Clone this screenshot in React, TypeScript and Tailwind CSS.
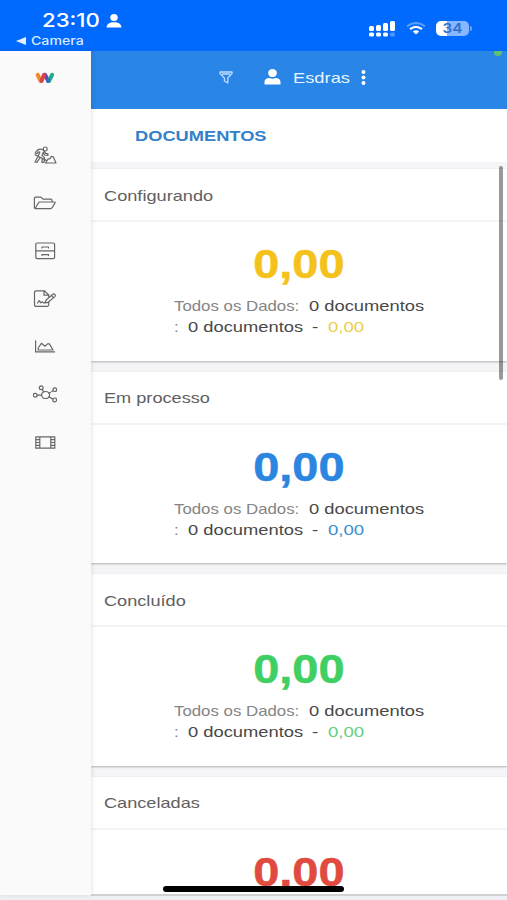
import type { ReactNode } from "react";

const cards = [
  { title: "Configurando", color: "text-[#f4c21a]", small: "text-[#ecd04a]", scale: "scale-x-[1.212]", details: true },
  { title: "Em processo", color: "text-[#2a86e0]", small: "text-[#3b8fd0]", scale: "scale-x-[1.21]", details: true },
  { title: "Concluído", color: "text-[#3fcf63]", small: "text-[#5fd085]", scale: "scale-x-[1.21]", details: true },
  { title: "Canceladas", color: "text-[#e04a3f]", small: "text-[#e04a3f]", scale: "scale-x-[1.21]", details: false },
];

function Wide({ box, scale, children }: { box: string; scale: string; children: ReactNode }) {
  return (
    <span className={`block shrink-0 whitespace-nowrap ${box}`}>
      <span className={`inline-block origin-left ${scale}`}>{children}</span>
    </span>
  );
}

function Icon({ children }: { children: ReactNode }) {
  return (
    <div className="flex h-12 items-center justify-center pr-[2px]">
      <svg width="24" height="20" viewBox="0 0 24 20" fill="none" stroke="#666" strokeWidth="1.2" strokeLinecap="round" strokeLinejoin="round">
        {children}
      </svg>
    </div>
  );
}

function Sidebar() {
  return (
    <aside className="z-10 h-[844px] w-[91px] shrink-0 bg-[#fafafa] shadow-[1px_0_4px_rgba(0,0,0,0.1)]">
      <div className="flex h-[54px] items-center justify-center pr-[1px]">
        <svg width="20" height="12" viewBox="0 0 20 12" fill="none" strokeWidth="4" strokeLinecap="round">
          <path d="M2.7 2.8 L5.6 9" stroke="#f08a28" />
          <path d="M10 2.8 L13.3 9" stroke="#5d49b8" />
          <path d="M6.5 9 L9.1 2.8" stroke="#d8424c" />
          <path d="M14 9 L17.1 2.8" stroke="#1fae8d" />
          <path d="M12.7 9.4 L13.8 8" stroke="#2d6fc0" strokeWidth="3" />
        </svg>
      </div>
      <nav className="pt-[26px]">
        <Icon>
          <circle cx="12.2" cy="4" r="2" />
          <path d="M10.2 4.8 C7 3.3 4 4.6 2.2 8 L3.8 8.8 L5.4 6.8 L6.8 7.2 L5.2 11 L2 17 L4 17.4 L7.2 12.2 L9.3 13.6 L8.9 17.4 L11 17.4 L11.5 12.6 L8.9 10.2 L10.2 7.4 L11.6 10 L14.9 10.4 L15 8.9 L12.6 8.4 Z M2 9.8 L13.8 15.6 M12.6 18 L15.2 13.8 L16.7 14 L18.3 11.4 L20.3 11.8 L23 18 Z" />
        </Icon>
        <Icon>
          <path d="M2.2 15.5 L1.4 15 V5.2 Q1.4 4.2 2.4 4.2 H8 L10 6.2 H18 Q19 6.2 19 7.2 V9 M2.2 15.5 L5.3 10 Q5.8 9 7 9 H21.5 Q22.6 9 22 10 L19.2 14.6 Q18.7 15.7 17.4 15.7 H2.4" />
        </Icon>
        <Icon>
          <rect x="2.8" y="2" width="18.8" height="15.6" rx="1.3" />
          <path d="M3 9.8 H21.4 M9 7 V6 H15.5 V7 M9 14.6 V13.6 H15.5 V14.6" />
        </Icon>
        <Icon>
          <path d="M15.8 13.2 V15.6 Q15.8 17.4 14.2 17.4 H3.2 Q1.5 17.4 1.5 15.8 V3.4 Q1.5 1.8 3.2 1.8 H11.3 L15.8 5.9 V8 M11 2 V6.2 H15.5 M4.5 14 L6.2 11.6 L7.8 13.8 L9.3 12.6 L10.5 13.8 L12 13.8 L13.2 11 L19.8 5.2 Q20.8 4.6 21.9 5.5 Q22.9 6.6 21.9 7.6 L15 13.3 L12 13.9 M18.4 6.4 L20.6 8.7" />
        </Icon>
        <Icon>
          <path d="M2.6 3.8 V14.9 H21.6 M5.2 13 V11 L8.4 6.3 L12 9.2 L14.5 6.9 H16.4 L20 13 Z" />
        </Icon>
        <Icon>
          <ellipse cx="12.6" cy="10" rx="4" ry="3.5" />
          <circle cx="8.2" cy="2.8" r="1.9" />
          <circle cx="2.2" cy="10.2" r="1.9" />
          <circle cx="21.8" cy="4.7" r="1.8" />
          <circle cx="21.7" cy="14.9" r="1.9" />
          <path d="M9.2 4.6 L10.7 6.9 M4.2 10.2 H8.6 M16 8.3 L17.5 7.3 M18.8 6.5 L20 5.7 M15.9 11.9 L19.8 14" />
        </Icon>
        <Icon>
          <path d="M2.8 3.8 H21.8 V15.2 H2.8 Z M6.8 3.8 V15.2 M17.8 3.8 V15.2 M2.8 6.6 H6.8 M2.8 9.5 H6.8 M2.8 12.4 H6.8 M17.8 6.6 H21.8 M17.8 9.5 H21.8 M17.8 12.4 H21.8" />
        </Icon>
      </nav>
    </aside>
  );
}

function StatusBar() {
  return (
    <div className="flex h-[51px] justify-between bg-[#0069fe] pr-[35px] text-white">
      <div>
        <div className="flex h-[32px] items-center pl-[42px] pt-[8px]">
          <Wide box="w-[64px] text-[18.5px] leading-[20px] font-medium font-['Inter','Liberation_Sans',sans-serif]" scale="scale-x-[1.2]">23:10</Wide>
          <svg width="16" height="14" viewBox="0 0 15 13" fill="white" preserveAspectRatio="none" className="mt-[1px]">
            <ellipse cx="7.5" cy="3.3" rx="3.5" ry="3.3" />
            <path d="M.5 12.6 C.5 9.2 3.6 7.6 7.5 7.6 S14.5 9.2 14.5 12.6 Z" />
          </svg>
        </div>
        <div className="flex h-[17px] items-center pl-[16px]">
          <svg width="10" height="8" viewBox="0 0 10 8" fill="#e5f0ff"><path d="M0 4 L10 0 V8 Z" /></svg>
          <Wide box="ml-[5px] w-[56px] text-[11.5px] leading-[14px] font-medium text-[#d9e8ff] font-['Inter','Liberation_Sans',sans-serif]" scale="scale-x-[1.23]">Camera</Wide>
        </div>
      </div>
      <div className="flex items-center pt-[6px]">
        <svg width="27" height="16" viewBox="0 0 27 16" fill="white">
          <rect x="0" y="5" width="5" height="5" rx="1.5" />
          <rect x="7" y="4" width="5" height="6" rx="1.5" />
          <rect x="14" y="2" width="5" height="8" rx="1.5" />
          <rect x="21" y="0" width="5" height="10" rx="1.5" />
          <rect x="0" y="11.5" width="5" height="4" rx="1.5" />
          <rect x="7" y="11.5" width="5" height="4" rx="1.5" />
          <rect x="14" y="11.5" width="5" height="4" rx="1.5" />
          <rect x="21" y="11.5" width="5" height="4" rx="1.5" opacity=".3" />
        </svg>
        <svg width="20" height="13" viewBox="0 0 20 13" fill="none" stroke="white" strokeWidth="2.1" className="ml-[10px]">
          <path d="M1 4.3 Q10 -2.2 19 4.3" opacity=".35" />
          <path d="M4 7.2 Q10 2.6 16 7.2" />
          <path d="M10 12.5 L6.8 9.6 Q10 7 13.2 9.6 Z" fill="white" stroke="none" />
        </svg>
        <div className="ml-[10px] flex h-[15px] w-[33px] items-center justify-center rounded-[5px] bg-[linear-gradient(90deg,#ffffff_34%,#86b7ff_34%)] text-[13px] leading-none font-semibold text-[#2c6fd0] font-['Inter','Liberation_Sans',sans-serif]">
          <span className="scale-x-[1.18]">34</span>
        </div>
        <div className="ml-[1px] h-[5px] w-[2px] rounded-r bg-[#69a5ff]" />
      </div>
    </div>
  );
}

function Card({ card }: { card: (typeof cards)[number] }) {
  return (
    <section className="h-[202.5px] shrink-0">
      <div className="h-[191.5px] bg-white shadow-[0_1px_2px_rgba(0,0,0,0.28)]">
        <h2 className="flex h-[53px] items-center border-b-2 border-[#f4f4f5] pl-[13px] pt-[3px] text-[15px] text-[#606060]">
          <Wide box="w-[120px]" scale={card.scale}>{card.title}</Wide>
        </h2>
        <div className={`flex justify-center pt-[18px] text-[41px] leading-[48px] font-bold ${card.color} ${card.details ? "" : "h-[60px] overflow-hidden"}`}>
          <span className="scale-x-[1.145] [-webkit-text-stroke:0.5px_currentColor]">0,00</span>
        </div>
        {card.details && (
          <div className="pl-[82.5px] pt-[8px] text-[14.5px] leading-[21px] text-[#484848]">
            <div className="flex">
              <Wide box="w-[135px] text-[#858585]" scale="scale-x-[1.16]">Todos os Dados:</Wide>
              <Wide box="w-[120px]" scale="scale-x-[1.265]">0 documentos</Wide>
            </div>
            <div className="flex">
              <Wide box="w-[14px] text-[#858585]" scale="scale-x-[1.16]">:</Wide>
              <Wide box="w-[124.5px]" scale="scale-x-[1.265]">0 documentos</Wide>
              <Wide box="w-[16px]" scale="scale-x-[1.3]">-</Wide>
              <Wide box={`w-[40px] ${card.small}`} scale="scale-x-[1.28]">0,00</Wide>
            </div>
          </div>
        )}
      </div>
    </section>
  );
}

export default function App() {
  return (
    <div className="relative h-[900px] w-[507px] overflow-hidden bg-[#eef0f5] font-['Liberation_Sans',Arial,sans-serif]">
      <StatusBar />
      <div className="flex h-[849px]">
        <Sidebar />
        <main className="flex h-[845px] min-w-0 flex-1 flex-col overflow-hidden border-b-2 border-[#cfd1d5]">
          <header className="relative flex h-[58px] shrink-0 items-center bg-[#2985e6] pb-[6px] pl-[128px] text-white">
            <svg width="14" height="13" viewBox="0 0 14 13" fill="none" stroke="#bedcfc" strokeWidth="1.3" strokeLinejoin="round">
              <path d="M1 1 H13 V2.5 L8.8 7 V12 L5.4 10 V7 L1 2.5 Z M3 3 H11" />
            </svg>
            <svg width="17" height="16" viewBox="0 0 17 16" fill="white" className="ml-[31px]">
              <ellipse cx="8.5" cy="4.1" rx="4.4" ry="4" />
              <path d="M.5 15.5 V13 C.5 10.4 3 9 5.5 9 Q8.5 10.3 11.5 9 C14 9 16.5 10.4 16.5 13 V15.5 Z" />
            </svg>
            <Wide box="ml-[12px] w-[67.5px] pt-[1px] text-[15px] leading-[20px] text-[#e8f4ff]" scale="scale-x-[1.22]">Esdras</Wide>
            <svg width="5" height="15" viewBox="0 0 5 15" fill="white">
              <circle cx="2.5" cy="2" r="2" /><circle cx="2.5" cy="7.5" r="2" /><circle cx="2.5" cy="13" r="2" />
            </svg>
            <div className="absolute right-[5px] top-0 h-[5px] w-[8px] rounded-b-sm bg-[#5fbf72]" />
          </header>
          <div className="flex h-[53px] shrink-0 items-center bg-white pl-[44px] text-[15.5px] font-bold text-[#3580ca]">
            <Wide box="w-[140px]" scale="scale-x-[1.178]">DOCUMENTOS</Wide>
          </div>
          <div className="min-h-0 flex-1 overflow-hidden bg-[#f5f5f7] pt-[7px]">
            {cards.map((card) => <Card key={card.title} card={card} />)}
          </div>
        </main>
      </div>
      <div className="absolute left-[499px] top-[166px] h-[214px] w-[4px] rounded-full bg-black/40" />
      <div className="absolute left-[163px] top-[886px] z-20 h-[6px] w-[181px] rounded-full bg-black" />
    </div>
  );
}
